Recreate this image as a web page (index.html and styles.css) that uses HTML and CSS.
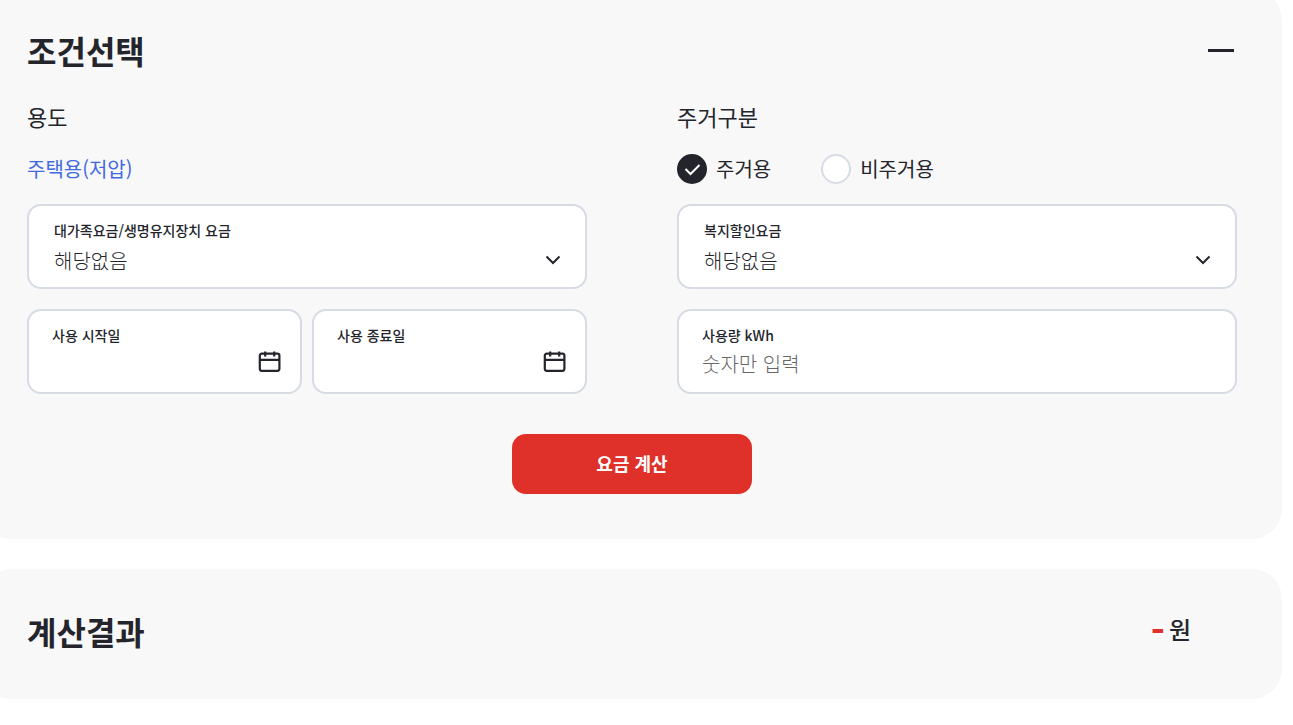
FILE: index.html
```html
<!DOCTYPE html>
<html lang="ko">
<head>
<meta charset="utf-8">
<title>전기요금 계산</title>
<link rel="stylesheet" href="styles.css">
</head>
<body>
<main class="page">
  <section class="panel conditions">
    <header class="panel-head">
      <h2 class="title">조건선택</h2>
      <button class="collapse" type="button" aria-label="접기"></button>
    </header>
    <form class="form">
      <div class="columns">
        <div class="group">
          <h3 class="subtitle">용도</h3>
          <p class="choice"><a class="usage" href="#">주택용(저압)</a></p>
        </div>
        <fieldset class="group">
          <legend class="subtitle">주거구분</legend>
          <div class="choice">
            <label class="radio"><input type="radio" name="home" checked>주거용</label>
            <label class="radio"><input type="radio" name="home">비주거용</label>
          </div>
        </fieldset>
        <div class="field select-field">
          <label for="family">대가족요금/생명유지장치 요금</label>
          <div class="control">
            <select id="family"><option>해당없음</option></select>
            <svg class="chevron" viewBox="0 0 16 10" aria-hidden="true"><path d="M1.500 1.500 8 8l6.500-6.500"/></svg>
          </div>
        </div>
        <div class="field select-field">
          <label for="welfare">복지할인요금</label>
          <div class="control">
            <select id="welfare"><option>해당없음</option></select>
            <svg class="chevron" viewBox="0 0 16 10" aria-hidden="true"><path d="M1.500 1.500 8 8l6.500-6.500"/></svg>
          </div>
        </div>
        <div class="dates">
          <div class="field">
            <label for="start">사용 시작일</label>
            <div class="control">
              <input id="start" type="text">
              <button class="calendar" type="button" aria-label="시작일 선택"><svg viewBox="0 0 24 24" aria-hidden="true"><rect x="1.800" y="2.600" width="19.600" height="17.200" rx="2"/><path d="M2 8.800h19.500M7.200 0.500v5M16.200 0.500v5"/></svg></button>
            </div>
          </div>
          <div class="field">
            <label for="end">사용 종료일</label>
            <div class="control">
              <input id="end" type="text">
              <button class="calendar" type="button" aria-label="종료일 선택"><svg viewBox="0 0 24 24" aria-hidden="true"><rect x="1.800" y="2.600" width="19.600" height="17.200" rx="2"/><path d="M2 8.800h19.500M7.200 0.500v5M16.200 0.500v5"/></svg></button>
            </div>
          </div>
        </div>
        <div class="field">
          <label for="amount">사용량 kWh</label>
          <div class="control"><input id="amount" type="text" placeholder="숫자만 입력"></div>
        </div>
      </div>
      <button class="submit" type="button">요금 계산</button>
    </form>
  </section>
  <section class="panel result">
    <h2 class="title">계산결과</h2>
    <p class="total"><strong>-</strong><span>원</span></p>
  </section>
</main>
</body>
</html>
```
FILE: styles.css
```css
* { box-sizing: border-box; }
body {
  margin: 0;
  background: #fff;
  color: #24252c;
  font-family: "Noto Sans CJK KR", "Noto Sans", sans-serif;
}
h2, h3, p, fieldset, legend { margin: 0; padding: 0; border: 0; }
button, input, select { font: inherit; color: inherit; margin: 0; }

.page {
  display: flex;
  flex-direction: column;
  gap: 30px;
  margin: -10px 11px 0 -18px;
}
.panel {
  background: #f8f8f8;
  border-radius: 30px;
  padding: 38px 45px 45px;
}
.panel-head {
  display: flex;
  align-items: center;
  justify-content: space-between;
}
.title { font-size: 32px; line-height: 44px; font-weight: 700; }
.collapse {
  display: flex;
  align-items: center;
  width: 32px;
  height: 40px;
  padding: 0 3px;
  border: 0;
  background: none;
}
.collapse::before { content: ""; flex: 1; height: 3px; background: #24252c; }

.form { display: flex; flex-direction: column; padding-top: 28px; }
.columns {
  display: grid;
  grid-template-columns: 1fr 1fr;
  column-gap: 90px;
  row-gap: 20px;
}
.group { min-width: 0; }
.subtitle { font-size: 22px; line-height: 32px; font-weight: 400; }
.choice {
  display: flex;
  align-items: center;
  gap: 50px;
  height: 30px;
  margin-top: 22px;
  font-size: 20px;
  line-height: 30px;
}
.usage { color: #4169e1; text-decoration: none; }
.radio { display: flex; align-items: center; gap: 9px; }
.radio input {
  appearance: none;
  width: 30px;
  height: 30px;
  border: 2px solid #d7dbe4;
  border-radius: 50%;
  background: #fff;
}
.radio input:checked {
  border-color: #24252c;
  background: #24252c url("data:image/svg+xml,%3Csvg xmlns='http://www.w3.org/2000/svg' viewBox='0 0 26 26'%3E%3Cpath d='M6.500 13l5 5L20.500 9' fill='none' stroke='white' stroke-width='2'/%3E%3C/svg%3E") center / 26px no-repeat;
}

.field {
  min-width: 0;
  height: 85px;
  padding: 14px 18px 0 23px;
  border: 2px solid #d7dbe4;
  border-radius: 14px;
  background: #fff;
}
.select-field { padding: 14px 24px 0 25px; }
.field label { display: block; font-size: 14px; line-height: 20px; font-weight: 500; }
.control { display: flex; align-items: center; height: 36px; }
.select-field .control { height: 40px; }
.control select, .control input {
  appearance: none;
  flex: 1;
  min-width: 0;
  height: 36px;
  padding: 0;
  border: 0;
  outline: 0;
  background: none;
  font-size: 20px;
  font-weight: 300;
}
.control input::placeholder { color: #666; opacity: 1; }
.chevron {
  width: 16px;
  height: 10px;
  fill: none;
  stroke: #24252c;
  stroke-width: 2;
  pointer-events: none;
}
.dates { display: grid; grid-template-columns: 1fr 1fr; gap: 10px; }
.calendar { display: flex; padding: 0; border: 0; background: none; }
.calendar svg { width: 24px; height: 24px; fill: none; stroke: #24252c; stroke-width: 2.2; }

.submit {
  align-self: center;
  width: 240px;
  height: 60px;
  margin-top: 40px;
  padding: 0 0 3px;
  border: 0;
  border-radius: 14px;
  background: #df3029;
  color: #fff;
  font-size: 18px;
  font-weight: 700;
}
.result {
  display: flex;
  align-items: flex-start;
  justify-content: space-between;
  padding: 40px 91px 46px 45px;
}
.total {
  display: flex;
  align-items: center;
  gap: 4px;
  font-size: 24px;
  line-height: 40px;
  font-weight: 500;
}
.total strong { color: #df3029; font-size: 38px; font-weight: 700; }
```
